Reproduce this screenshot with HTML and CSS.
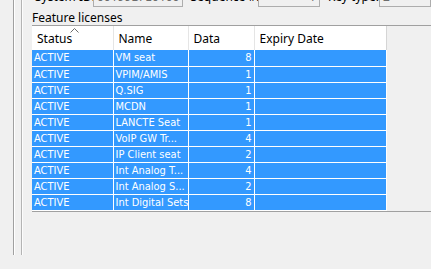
FILE: index.html
```
<!DOCTYPE html>
<html lang="en">
<head>
    <meta charset="UTF-8">
    <title>Feature licenses</title>
    <link rel="stylesheet" href="styles.css">
</head>
<body>
    <div class="frame">
        <div class="panel">
            <div class="id-row">
                <span class="lbl lbl-sys">System ID:</span>
                <span class="field field-sys">00199BFE0100</span>
                <span class="lbl lbl-seq">Sequence #:</span>
                <span class="field field-seq">1</span>
                <span class="lbl lbl-key">Key type:</span>
                <span class="field field-key">2</span>
            </div>

            <div class="section-title">Feature licenses</div>

            <div class="pane">
                <table class="grid">
                    <thead>
                        <tr>
                            <th class="col-status">Status
                                <svg class="sort" width="9" height="5" viewBox="0 0 9 5"><polyline points="0.5,4.5 4.5,0.5 8.5,4.5" fill="none" stroke="#6d6d6d" stroke-width="1"/></svg>
                            </th>
                            <th class="col-name">Name</th>
                            <th class="col-data">Data</th>
                            <th class="col-exp">Expiry Date</th>
                        </tr>
                    </thead>
                    <tbody>
                        <tr><td>ACTIVE</td><td>VM seat</td><td class="num">8</td><td></td></tr>
                        <tr><td>ACTIVE</td><td>VPIM/AMIS</td><td class="num">1</td><td></td></tr>
                        <tr><td>ACTIVE</td><td>Q.SIG</td><td class="num">1</td><td></td></tr>
                        <tr><td>ACTIVE</td><td>MCDN</td><td class="num">1</td><td></td></tr>
                        <tr><td>ACTIVE</td><td>LANCTE Seat</td><td class="num">1</td><td></td></tr>
                        <tr><td>ACTIVE</td><td>VoIP GW Tr...</td><td class="num">4</td><td></td></tr>
                        <tr><td>ACTIVE</td><td>IP Client seat</td><td class="num">2</td><td></td></tr>
                        <tr><td>ACTIVE</td><td>Int Analog T...</td><td class="num">4</td><td></td></tr>
                        <tr><td>ACTIVE</td><td>Int Analog S...</td><td class="num">2</td><td></td></tr>
                        <tr><td>ACTIVE</td><td>Int Digital Sets</td><td class="num">8</td><td></td></tr>
                    </tbody>
                </table>
            </div>
        </div>
    </div>
</body>
</html>
```

FILE: styles.css
```
* {
    margin: 0;
    padding: 0;
    box-sizing: border-box;
}

html, body {
    width: 431px;
    height: 269px;
    overflow: hidden;
}

body {
    background: #f0f0f0;
    font-family: 'Noto Sans', 'Open Sans', sans-serif;
    font-size: 12px;
    color: #000;
}

/* outer window frame: two thin lines on the left */
.frame {
    margin-left: 13px;
    height: 269px;
    border-left: 1px solid #a0a0a0;
    box-shadow: inset 1px 0 #fff;
}

.panel {
    margin-left: 7px;
    height: 269px;
    border-left: 1px solid #b4b4b4;
    box-shadow: inset 1px 0 #fcfcfc;
    padding-left: 10px;
}

/* top row, partly scrolled off */
.id-row {
    display: flex;
    align-items: center;
    height: 21px;
    margin-top: -14px;
    padding-left: 3px;
    white-space: nowrap;
}

.lbl {
    color: #000;
    line-height: 21px;
}

.lbl-sys { width: 58px; }
.lbl-seq { width: 68px; margin-left: 7px; }
.lbl-key { width: 51px; margin-left: 8px; }

.field {
    height: 21px;
    line-height: 19px;
    border: 1px solid #adadad;
    background: #f0f0f0;
    color: #6d6d6d;
    padding: 0 3px;
}

.field-sys { width: 101px; }
.field-seq { width: 71px; text-align: right; }
.field-key { width: 60px; }

.section-title {
    height: 18px;
    line-height: 16px;
    padding-top: 3px;
}

/* scroll pane holding the grid */
.pane {
    width: 420px;
    height: 187px;
    border-top: 1px solid #a0a0a0;
    border-bottom: 1px solid #a0a0a0;
}

.grid {
    border-collapse: collapse;
    table-layout: fixed;
    width: 354px;
}

.grid th {
    position: relative;
    height: 24px;
    background: #fff;
    font-weight: normal;
    text-align: left;
    padding: 0 0 0 5px;
    border-right: 1px solid #e5e5e5;
    white-space: nowrap;
}

.grid th.col-exp {
    border-right: 1px solid #d5d5d5;
}

.sort {
    position: absolute;
    left: 38px;
    top: 2px;
}

.col-status { width: 81px; }
.col-name { width: 75px; }
.col-data { width: 66px; }
.col-exp { width: 132px; }

.grid td {
    height: 16px;
    background: #3399ff;
    color: #fff;
    font-family: 'DejaVu Sans Condensed', 'Liberation Sans', sans-serif;
    font-size: 11px;
    line-height: 15px;
    padding: 0 2px;
    border-right: 1px solid #fff;
    border-bottom: 1px solid #fff;
    white-space: nowrap;
    overflow: hidden;
}

.grid td.num {
    text-align: right;
}
```
